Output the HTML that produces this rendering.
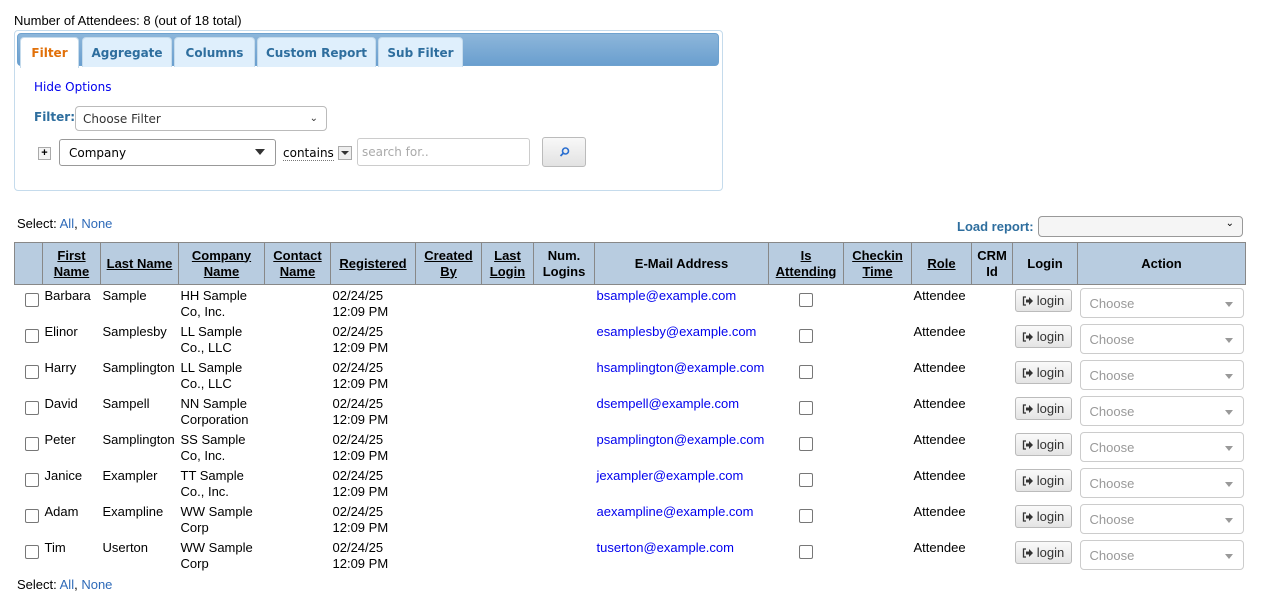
<!DOCTYPE html>
<html><head><style>
body{margin:0;width:1272px;height:608px;overflow:hidden;background:#fff;font-family:"Liberation Sans",Arial,sans-serif;font-size:13px;color:#000;position:relative}
.abs{position:absolute}
.v{font-family:"DejaVu Sans",Verdana,sans-serif}
.panel{left:14px;top:30px;width:707px;height:159px;border:1px solid #c5dbec;border-radius:4px}
.tabbar{left:17px;top:33px;width:702px;height:33px;background:linear-gradient(#8db6da,#6a9fcf);border-radius:4px;border:1px solid #6ea2cf;box-sizing:border-box}
.tab{position:absolute;top:37px;height:30px;background:#dfeffc;border:1px solid #c5dbec;border-bottom:none;border-radius:4px 4px 0 0;box-sizing:border-box;font-family:"DejaVu Sans",Verdana,sans-serif;font-size:12px;font-weight:bold;color:#2e6e9e;text-align:center;line-height:31px}
.tab.on{background:#fff;color:#e17009;height:31px}
table{position:absolute;left:14px;top:242px;border-collapse:collapse;table-layout:fixed;width:1231px}
th{background:#b8cce0;border:1px solid #888;font-size:13px;font-weight:bold;height:41px;padding:0 2px;line-height:16px;text-align:center}
td{height:36px;vertical-align:top;padding:3px 2px 0 2px;line-height:16px;box-sizing:border-box}
.cb{width:12px;height:12px;border:1px solid #777;border-radius:2px;background:#fff;margin:5px 0 0 8px}
a{color:#0000ee;text-decoration:none}
.lg{display:inline-block;width:57px;height:23px;border:1px solid #bbb;border-radius:3px;background:linear-gradient(#fafafa,#e4e4e4);font-size:13px;line-height:22px;text-align:center;margin-top:1px;box-sizing:border-box;color:#333}
.lg svg{vertical-align:-1px;margin-right:3px}
.ch{width:164px;height:30px;border:1px solid #ccc;border-radius:4px;box-sizing:border-box;color:#999;font-size:13px;line-height:30px;padding-left:9px;position:relative;margin-top:0}
.ch:after{content:"";position:absolute;right:10px;top:13px;border:4px solid transparent;border-top:5px solid #999}
</style></head><body>
<div class="abs" style="left:14px;top:13px">Number of Attendees: 8 (out of 18 total)</div>
<div class="abs panel"></div>
<div class="abs tabbar"></div>
<div class="tab on" style="left:20px;width:59px">Filter</div>
<div class="tab" style="left:82px;width:90px">Aggregate</div>
<div class="tab" style="left:174px;width:81px">Columns</div>
<div class="tab" style="left:257px;width:119px">Custom Report</div>
<div class="tab" style="left:378px;width:85px">Sub Filter</div>
<div class="abs v" style="left:34px;top:80px;font-size:12px;color:#0000ee">Hide Options</div>
<div class="abs v" style="left:34px;top:110px;font-size:12px;color:#2e6e9e;font-weight:bold">Filter:</div>
<div class="abs v" style="left:75px;top:106px;width:252px;height:25px;border:1px solid #bbb;border-radius:4px;box-sizing:border-box;font-size:12px;line-height:24px;padding-left:7px;color:#333">Choose Filter<span style="position:absolute;right:8px;font-size:10px">&#8964;</span></div>
<div class="abs" style="left:38px;top:147px;width:11px;height:11px;border:1px solid #aaa;font-size:11px;line-height:10px;text-align:center;font-weight:bold;background:#f4f4f4">+</div>
<div class="abs v" style="left:59px;top:139px;width:217px;height:27px;border:1px solid #999;border-radius:3px;box-sizing:border-box;font-size:12px;line-height:26px;padding-left:9px">Company<span style="position:absolute;right:10px;top:9px;border:5px solid transparent;border-top:6px solid #333"></span></div>
<div class="abs v" style="left:283px;top:146px;font-size:12px;border-bottom:1px dotted #777;line-height:14px">contains</div>
<div class="abs" style="left:338px;top:146px;width:12px;height:12px;border:1px solid #aaa;background:#eee"><span style="position:absolute;left:2px;top:4px;border:4px solid transparent;border-top:4px solid #333"></span></div>
<div class="abs v" style="left:357px;top:138px;width:173px;height:28px;border:1px solid #ccc;border-radius:3px;box-sizing:border-box;font-size:12px;color:#aaa;line-height:27px;padding-left:4px">search for..</div>
<div class="abs" style="left:542px;top:137px;width:44px;height:30px;border:1px solid #bbb;border-radius:3px;box-sizing:border-box;background:linear-gradient(#f8f8f8,#e2e2e2)"><svg width="44" height="30" style="position:absolute;left:-1px;top:-1px"><circle cx="23.5" cy="14" r="3" fill="none" stroke="#2a6fd0" stroke-width="1.6"/><line x1="21.5" y1="16" x2="18.5" y2="19" stroke="#2a6fd0" stroke-width="1.8"/></svg></div>
<div class="abs" style="left:17px;top:216px">Select: <a style="color:#2e6ab8">All</a>, <a style="color:#2e6ab8">None</a></div>
<div class="abs" style="left:957px;top:219px;font-weight:bold;color:#2e6e9e">Load report:</div>
<div class="abs" style="left:1038px;top:216px;width:205px;height:21px;border:1px solid #999;border-radius:4px;box-sizing:border-box;background:#f5f5f5"><span style="position:absolute;right:8px;top:1px;font-size:10px">&#8964;</span></div>
<table>
<colgroup><col style="width:28px"><col style="width:58px"><col style="width:78px"><col style="width:86px"><col style="width:66px"><col style="width:85px"><col style="width:66px"><col style="width:52px"><col style="width:61px"><col style="width:174px"><col style="width:75px"><col style="width:68px"><col style="width:60px"><col style="width:41px"><col style="width:65px"><col style="width:168px"></colgroup>
<tr><th></th><th><u>First<br>Name</u></th><th><u>Last Name</u></th><th><u>Company<br>Name</u></th><th><u>Contact<br>Name</u></th><th><u>Registered</u></th><th><u>Created<br>By</u></th><th><u>Last<br>Login</u></th><th>Num.<br>Logins</th><th>E-Mail Address</th><th><u>Is<br>Attending</u></th><th><u>Checkin<br>Time</u></th><th><u>Role</u></th><th>CRM<br>Id</th><th>Login</th><th>Action</th></tr>
<tr><td><div class="cb"></div></td><td>Barbara</td><td>Sample</td><td>HH Sample<br>Co, Inc.</td><td></td><td>02/24/25<br>12:09 PM</td><td></td><td></td><td></td><td><a>bsample@example.com</a></td><td><div class="cb" style="margin-left:28px"></div></td><td></td><td>Attendee</td><td></td><td><span class="lg"><svg width="12" height="10"><path d="M4 1H1.5V9H4" fill="none" stroke="#333" stroke-width="1.3"/><path d="M4 3.5H7V1L11 5 7 9V6.5H4Z" fill="#333"/></svg>login</span></td><td><div class="ch">Choose</div></td></tr>
<tr><td><div class="cb"></div></td><td>Elinor</td><td>Samplesby</td><td>LL Sample<br>Co., LLC</td><td></td><td>02/24/25<br>12:09 PM</td><td></td><td></td><td></td><td><a>esamplesby@example.com</a></td><td><div class="cb" style="margin-left:28px"></div></td><td></td><td>Attendee</td><td></td><td><span class="lg"><svg width="12" height="10"><path d="M4 1H1.5V9H4" fill="none" stroke="#333" stroke-width="1.3"/><path d="M4 3.5H7V1L11 5 7 9V6.5H4Z" fill="#333"/></svg>login</span></td><td><div class="ch">Choose</div></td></tr>
<tr><td><div class="cb"></div></td><td>Harry</td><td>Samplington</td><td>LL Sample<br>Co., LLC</td><td></td><td>02/24/25<br>12:09 PM</td><td></td><td></td><td></td><td><a>hsamplington@example.com</a></td><td><div class="cb" style="margin-left:28px"></div></td><td></td><td>Attendee</td><td></td><td><span class="lg"><svg width="12" height="10"><path d="M4 1H1.5V9H4" fill="none" stroke="#333" stroke-width="1.3"/><path d="M4 3.5H7V1L11 5 7 9V6.5H4Z" fill="#333"/></svg>login</span></td><td><div class="ch">Choose</div></td></tr>
<tr><td><div class="cb"></div></td><td>David</td><td>Sampell</td><td>NN Sample<br>Corporation</td><td></td><td>02/24/25<br>12:09 PM</td><td></td><td></td><td></td><td><a>dsempell@example.com</a></td><td><div class="cb" style="margin-left:28px"></div></td><td></td><td>Attendee</td><td></td><td><span class="lg"><svg width="12" height="10"><path d="M4 1H1.5V9H4" fill="none" stroke="#333" stroke-width="1.3"/><path d="M4 3.5H7V1L11 5 7 9V6.5H4Z" fill="#333"/></svg>login</span></td><td><div class="ch">Choose</div></td></tr>
<tr><td><div class="cb"></div></td><td>Peter</td><td>Samplington</td><td>SS Sample<br>Co, Inc.</td><td></td><td>02/24/25<br>12:09 PM</td><td></td><td></td><td></td><td><a>psamplington@example.com</a></td><td><div class="cb" style="margin-left:28px"></div></td><td></td><td>Attendee</td><td></td><td><span class="lg"><svg width="12" height="10"><path d="M4 1H1.5V9H4" fill="none" stroke="#333" stroke-width="1.3"/><path d="M4 3.5H7V1L11 5 7 9V6.5H4Z" fill="#333"/></svg>login</span></td><td><div class="ch">Choose</div></td></tr>
<tr><td><div class="cb"></div></td><td>Janice</td><td>Exampler</td><td>TT Sample<br>Co., Inc.</td><td></td><td>02/24/25<br>12:09 PM</td><td></td><td></td><td></td><td><a>jexampler@example.com</a></td><td><div class="cb" style="margin-left:28px"></div></td><td></td><td>Attendee</td><td></td><td><span class="lg"><svg width="12" height="10"><path d="M4 1H1.5V9H4" fill="none" stroke="#333" stroke-width="1.3"/><path d="M4 3.5H7V1L11 5 7 9V6.5H4Z" fill="#333"/></svg>login</span></td><td><div class="ch">Choose</div></td></tr>
<tr><td><div class="cb"></div></td><td>Adam</td><td>Exampline</td><td>WW Sample<br>Corp</td><td></td><td>02/24/25<br>12:09 PM</td><td></td><td></td><td></td><td><a>aexampline@example.com</a></td><td><div class="cb" style="margin-left:28px"></div></td><td></td><td>Attendee</td><td></td><td><span class="lg"><svg width="12" height="10"><path d="M4 1H1.5V9H4" fill="none" stroke="#333" stroke-width="1.3"/><path d="M4 3.5H7V1L11 5 7 9V6.5H4Z" fill="#333"/></svg>login</span></td><td><div class="ch">Choose</div></td></tr>
<tr><td><div class="cb"></div></td><td>Tim</td><td>Userton</td><td>WW Sample<br>Corp</td><td></td><td>02/24/25<br>12:09 PM</td><td></td><td></td><td></td><td><a>tuserton@example.com</a></td><td><div class="cb" style="margin-left:28px"></div></td><td></td><td>Attendee</td><td></td><td><span class="lg"><svg width="12" height="10"><path d="M4 1H1.5V9H4" fill="none" stroke="#333" stroke-width="1.3"/><path d="M4 3.5H7V1L11 5 7 9V6.5H4Z" fill="#333"/></svg>login</span></td><td><div class="ch">Choose</div></td></tr>
</table>
<div class="abs" style="left:17px;top:577px">Select: <a style="color:#2e6ab8">All</a>, <a style="color:#2e6ab8">None</a></div>
</body></html>
